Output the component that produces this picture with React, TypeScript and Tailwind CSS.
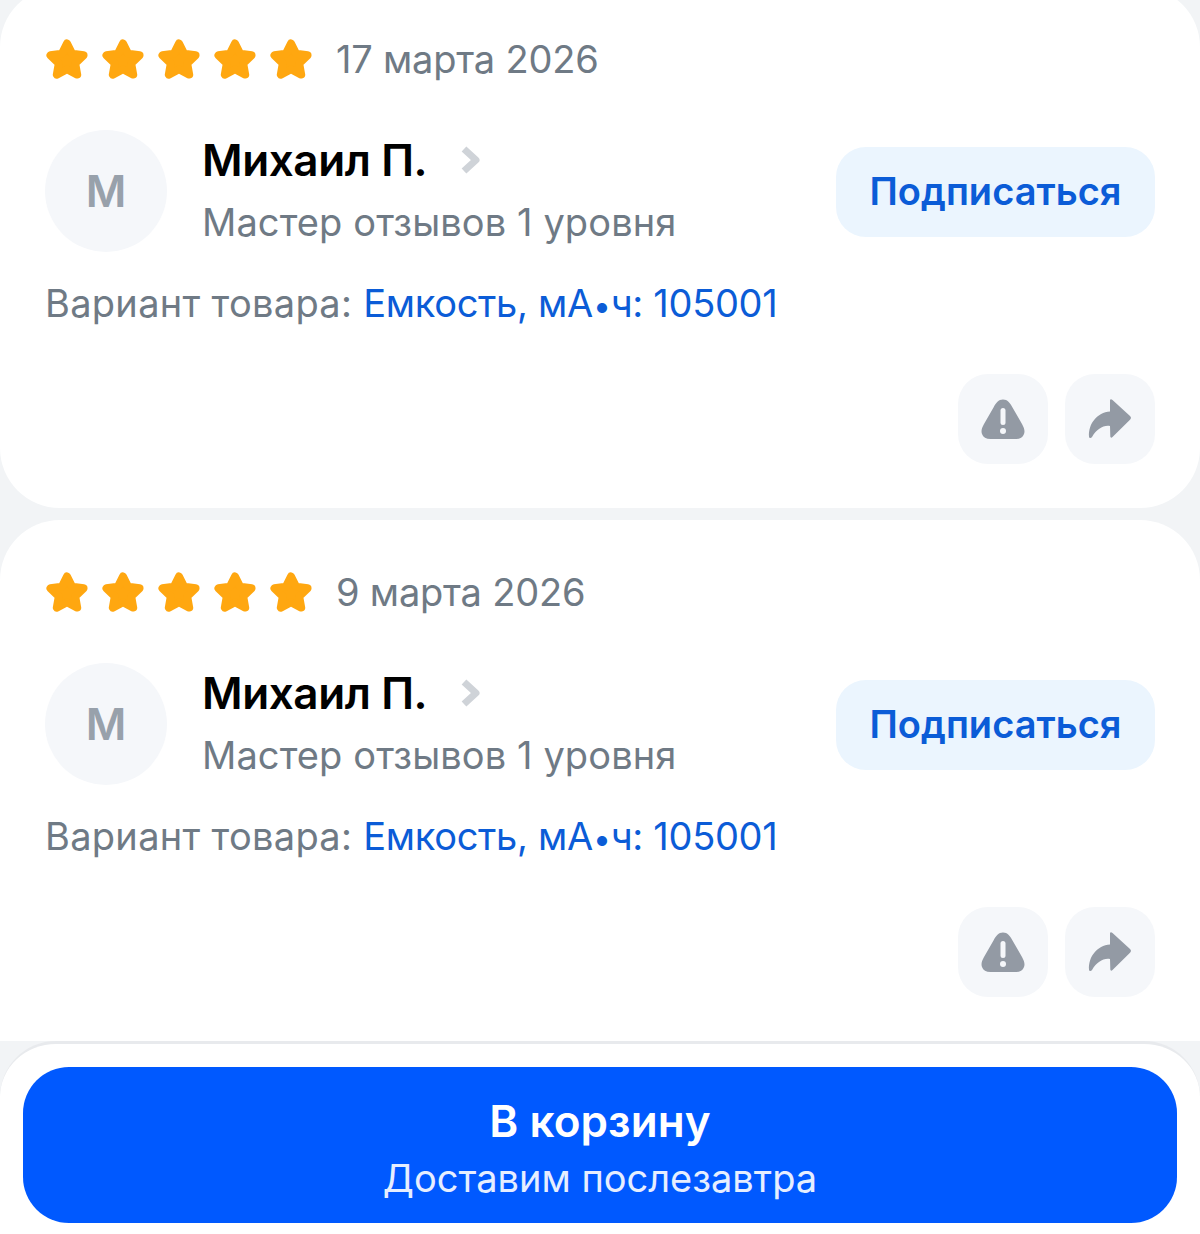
const font = 'font-["Inter","Noto_Sans",sans-serif]'

function Star() {
  return (
    <svg width="42" height="40" viewBox="0 0 42 40" className="shrink-0">
      <path
        d="M21 4.5 L26 14.6 L37.5 16.3 L29.2 24.4 L31.2 35.6 L21 30.3 L10.8 35.6 L12.8 24.4 L4.5 16.3 L16 14.6 Z"
        fill="#ffa710"
        stroke="#ffa710"
        strokeWidth="8"
        strokeLinejoin="round"
      />
    </svg>
  )
}

function ReviewCard({ date, rounded }: { date: string; rounded: string }) {
  return (
    <section className={`bg-white h-[521px] pl-[46px] pr-[45px] pt-[52px] ${rounded}`}>
      <div className="flex items-center h-[40px]">
        <div className="flex gap-[14px]">
          <Star />
          <Star />
          <Star />
          <Star />
          <Star />
        </div>
        <span className="ml-[24px] text-[38px] leading-none tracking-[-0.2px] text-[#6f7a85]">{date}</span>
      </div>

      <div className="flex items-start mt-[51px] -ml-px">
        <div className="w-[122px] h-[122px] rounded-full bg-[#f5f7fa] flex items-center justify-center text-[44px] font-semibold text-[#98a1ab]">
          М
        </div>
        <div className="ml-[35px] flex-1">
          <div className="flex items-center h-[60px]">
            <span className="text-[44px] leading-none font-semibold tracking-[-0.4px] text-black">Михаил П.</span>
            <svg width="24" height="32" viewBox="0 0 24 32" className="ml-[32px]">
              <path d="M5 5 L17 16 L5 27" fill="none" stroke="#cfd3d8" strokeWidth="7" strokeLinejoin="round" />
            </svg>
          </div>
          <div className="mt-[2px] text-[38px] leading-[60px] tracking-[0.1px] text-[#6f7a85]">
            Мастер отзывов 1 уровня
          </div>
        </div>
        <button className="mt-[17px] w-[319px] h-[90px] pb-[2px] rounded-[30px] bg-[#ebf5fe] text-[38px] font-semibold text-[#0b5cd7]">
          Подписаться
        </button>
      </div>

      <div className="mt-[21px] -ml-px text-[38px] leading-[60px] tracking-[0.3px] text-[#6f7a85]">
        Вариант товара:{' '}
        <span className="tracking-[-0.3px] text-[#0b5cd7]">
          Емкость, мА<span className="text-[32px]">•</span>ч: 105001
        </span>
      </div>

      <div className="flex justify-end gap-[17px] mt-[38px]">
        <button className="w-[90px] h-[90px] rounded-[30px] bg-[#f5f7fa] flex items-center justify-center">
          <svg width="44" height="42" viewBox="0 0 44 42">
            <path
              d="M22 1.5 C17.5 1.5 15 5 12.5 9.5 L3 26 C0.5 30.5 0 33 1 36 C2.2 39.5 5 41 9.5 41 L34.5 41 C39 41 41.8 39.5 43 36 C44 33 43.5 30.5 41 26 L31.5 9.5 C29 5 26.5 1.5 22 1.5 Z"
              fill="#939aa4"
            />
            <rect x="19.5" y="10" width="5" height="17" rx="2.5" fill="#f5f7fa" />
            <circle cx="22" cy="33" r="3" fill="#f5f7fa" />
          </svg>
        </button>
        <button className="w-[90px] h-[90px] rounded-[30px] bg-[#f5f7fa] flex items-center justify-center">
          <svg width="44" height="40" viewBox="0 0 44 40">
            <path
              d="M22 1 C22.5 0 23.5 0.2 24.5 1 L42 17 C43.3 18.2 43.3 19.5 42 20.7 L24.5 38 C23.5 39 22.4 38.8 22.3 37.5 L22 27 C15 26 9 30 4 38 C3 39.6 1.2 39.4 1 37.5 C0.2 25 9 13.5 22 12.5 Z"
              fill="#939aa4"
            />
          </svg>
        </button>
      </div>
    </section>
  )
}

export default function App() {
  return (
    <div className={`${font} w-[1200px] h-[1234px] overflow-hidden bg-[#f2f4f6]`}>
      <div className="-mt-[13px]">
        <ReviewCard date="17 марта 2026" rounded="rounded-[60px]" />
      </div>
      <div className="mt-[12px]">
        <ReviewCard date="9 марта 2026" rounded="rounded-t-[60px]" />
      </div>
      <div className="h-[193px] bg-white rounded-t-[56px] border-t-[3px] border-[#e8eaed] px-[23px] pt-[23px]">
        <button className="w-full h-[156px] pt-[9px] rounded-[46px] bg-[#0059ff] text-white flex flex-col items-center justify-center">
          <span className="text-[44px] leading-[54px] font-semibold tracking-[0.1px]">В корзину</span>
          <span className="mt-[3px] text-[38px] leading-[54px] text-[#e6eeff]">Доставим послезавтра</span>
        </button>
      </div>
    </div>
  )
}
